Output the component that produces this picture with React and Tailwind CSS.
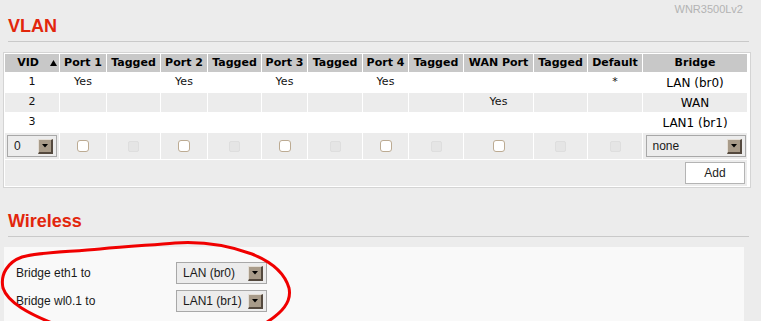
import React from "react";

const COLS =
  "grid-cols-[54px_46px_53px_46px_53px_45px_54px_45px_54px_69px_53px_54px_104px]";

function Arrow() {
  return (
    <svg width="6" height="4" viewBox="0 0 6 4">
      <polygon points="0,0 6,0 3,3.5" fill="#000" />
    </svg>
  );
}

function SelectBox({ w, text }) {
  return (
    <div
      className={`${w} h-[22px] flex items-center justify-between border border-[#a8a8a8] bg-[#ececec] pl-[6px] pr-[3px] font-['Liberation_Sans',Arial,sans-serif] text-[12px] text-[#1a1a1a] leading-none`}
    >
      <span>{text}</span>
      <div className="w-[15px] h-[15px] flex items-center justify-center bg-[#a89b89] border-t border-l border-t-[#e4ded6] border-l-[#e4ded6] border-b-2 border-r-2 border-b-[#54493e] border-r-[#54493e]">
        <Arrow />
      </div>
    </div>
  );
}

function Cb() {
  return <div className="w-[12px] h-[12px] rounded-[3px] border border-[#bcab93] bg-white" />;
}
function CbDis() {
  return <div className="w-[11px] h-[11px] rounded-[2px] border border-[#dedede] bg-[#e5e5e5]" />;
}

const headers = [
  "VID",
  "Port 1",
  "Tagged",
  "Port 2",
  "Tagged",
  "Port 3",
  "Tagged",
  "Port 4",
  "Tagged",
  "WAN Port",
  "Tagged",
  "Default",
  "Bridge",
];

const rows = [
  { bg: "bg-white", cells: ["1", "Yes", "", "Yes", "", "Yes", "", "Yes", "", "", "", "*", "LAN (br0)"] },
  { bg: "bg-[#ececec]", cells: ["2", "", "", "", "", "", "", "", "", "Yes", "", "", "WAN"] },
  { bg: "bg-white", cells: ["3", "", "", "", "", "", "", "", "", "", "", "", "LAN1 (br1)"] },
];

export default function App() {
  return (
    <div className="relative w-[761px] h-[321px] overflow-hidden bg-[#ececec] font-['Liberation_Sans',Arial,sans-serif]">
      {/* top bar */}
      <div className="h-[15px] flex justify-end pr-[18px] pt-[4px] text-[11px] leading-[11px] text-[#b3b3b3]">
        WNR3500Lv2
      </div>

      {/* VLAN heading */}
      <div className="ml-[8px] h-[22px] text-[18px] leading-[22px] font-bold text-[#e2260c]">VLAN</div>
      <div className="mt-[4px] ml-[8px] w-[741px] h-px bg-[#c9c9c9]" />

      {/* table box */}
      <div className="mt-[10px] ml-[3px] w-[748px] border border-[#d4d4d4] bg-white pt-px pl-px pr-[3px] pb-px">
        <div
          className={`grid ${COLS} grid-rows-[18px_19px_19px_19px_26px_26px] gap-px font-['DejaVu_Sans',Verdana,sans-serif] text-[11px] text-[#111]`}
        >
          {headers.map((h, i) =>
            i === 0 ? (
              <div key={i} className="bg-[#c8c8c8] flex items-center justify-end pr-[2px] font-bold text-black">
                <span>VID</span>
                <svg width="7" height="6" viewBox="0 0 7 6" className="ml-[11px]">
                  <polygon points="3.5,0 7,6 0,6" fill="#000" />
                </svg>
              </div>
            ) : (
              <div key={i} className="bg-[#c8c8c8] flex items-center justify-center font-bold text-black whitespace-nowrap">
                {h}
              </div>
            )
          )}

          {rows.map((r, ri) =>
            r.cells.map((c, ci) => (
              <div
                key={`${ri}-${ci}`}
                className={`${r.bg} flex items-center justify-center whitespace-nowrap ${ci === 12 ? "text-[12px] text-black" : ""}`}
              >
                {c}
              </div>
            ))
          )}

          {/* input row */}
          <div className="bg-[#ececec] flex items-center justify-center">
            <SelectBox w="w-[50px]" text="0" />
          </div>
          {[0, 1, 2, 3, 4, 5, 6, 7, 8, 9, 10].map((k) => (
            <div key={k} className="bg-[#ececec] flex items-center justify-center">
              {k === 10 ? <CbDis /> : k % 2 === 0 ? <Cb /> : <CbDis />}
            </div>
          ))}
          <div className="bg-[#ececec] flex items-center justify-center pl-px">
            <SelectBox w="w-[100px]" text="none" />
          </div>

          {/* add row */}
          <div className="col-span-13 bg-[#ececec] flex items-center justify-end pr-[2px]">
            <div className="w-[60px] h-[22px] flex items-center justify-center bg-white border border-[#b4b4b4] font-['Liberation_Sans',Arial,sans-serif] text-[12px] text-[#222]">
              Add
            </div>
          </div>
        </div>
      </div>

      {/* Wireless heading */}
      <div className="mt-[22px] ml-[8px] h-[22px] text-[18px] leading-[22px] font-bold text-[#e2260c]">Wireless</div>
      <div className="mt-[4px] ml-[8px] w-[741px] h-px bg-[#c9c9c9]" />

      <div className="mt-[10px] ml-[4px] w-[740px] h-[80px] bg-[#f9f9f9] pt-[15px] flex flex-col gap-[6px]">
        <div className="flex items-center">
          <div className="w-[172px] pl-[12px] text-[12px] text-[#1a1a1a]">Bridge eth1 to</div>
          <SelectBox w="w-[91px]" text="LAN (br0)" />
        </div>
        <div className="flex items-center">
          <div className="w-[172px] pl-[12px] text-[12px] text-[#1a1a1a]">Bridge wl0.1 to</div>
          <SelectBox w="w-[91px]" text="LAN1 (br1)" />
        </div>
      </div>

      {/* hand-drawn red ellipse */}
      <svg className="absolute left-0 top-0 pointer-events-none" width="761" height="321" viewBox="0 0 761 321">
        <path
          d="M 52 323 C 30 314, 8 303, 3 288 C 0 274, 8 262, 22 257 C 40 252, 70 252, 100 249 C 130 246, 155 245, 175 243 C 205 241, 230 246, 252 254 C 272 262, 285 274, 289 288 C 292 302, 282 313, 264 324"
          fill="none"
          stroke="#f00000"
          strokeWidth="3"
          strokeLinecap="round"
        />
      </svg>
    </div>
  );
}
